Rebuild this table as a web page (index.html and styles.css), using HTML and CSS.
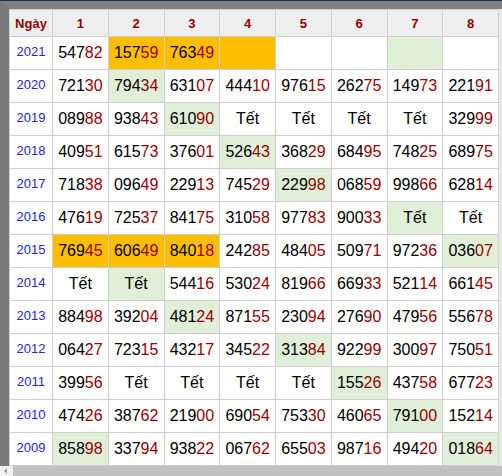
FILE: index.html
```html
<!DOCTYPE html>
<html>
<head>
<meta charset="utf-8">
<link rel="stylesheet" href="styles.css">
</head>
<body>
<div class="frame">
  <div class="inner">
    <div class="grid" id="grid">
      <div class="hd">Ngày</div><div class="hd">1</div><div class="hd">2</div><div class="hd">3</div><div class="hd">4</div><div class="hd">5</div><div class="hd">6</div><div class="hd">7</div><div class="hd">8</div>
    </div>
  </div>
  <div class="hscroll"><span class="arrow"></span><span class="thumb"></span></div>
</div>
<script src="script.js"></script>
</body>
</html>
```
FILE: script.js
```js
var rows = [
  ["2021", ["54782",""],["15759","o"],["76349","o"],["","o"],["",""],["",""],["","g"],["",""]],
  ["2020", ["72130",""],["79434","g"],["63107",""],["44410",""],["97615",""],["26275",""],["14973",""],["22191",""]],
  ["2019", ["08988",""],["93843",""],["61090","g"],["Tết",""],["Tết",""],["Tết",""],["Tết",""],["32999",""]],
  ["2018", ["40951",""],["61573",""],["37601",""],["52643","g"],["36829",""],["68495",""],["74825",""],["68975",""]],
  ["2017", ["71838",""],["09649",""],["22913",""],["74529",""],["22998","g"],["06859",""],["99866",""],["62814",""]],
  ["2016", ["47619",""],["72537",""],["84175",""],["31058",""],["97783",""],["90033",""],["Tết","g"],["Tết",""]],
  ["2015", ["76945","o"],["60649","o"],["84018","o"],["24285",""],["48405",""],["50971",""],["97236",""],["03607","g"]],
  ["2014", ["Tết",""],["Tết","g"],["54416",""],["53024",""],["81966",""],["66933",""],["52114",""],["66145",""]],
  ["2013", ["88498",""],["39204",""],["48124","g"],["87155",""],["23094",""],["27690",""],["47956",""],["55678",""]],
  ["2012", ["06427",""],["72315",""],["43217",""],["34522",""],["31384","g"],["92299",""],["30097",""],["75051",""]],
  ["2011", ["39956",""],["Tết",""],["Tết",""],["Tết",""],["Tết",""],["15526","g"],["43758",""],["67723",""]],
  ["2010", ["47426",""],["38762",""],["21900",""],["69054",""],["75330",""],["46065",""],["79100","g"],["15214",""]],
  ["2009", ["85898","g"],["33794",""],["93822",""],["06762",""],["65503",""],["98716",""],["49420",""],["01864","g"]]
];
var grid = document.getElementById("grid");
rows.forEach(function (r) {
  var y = document.createElement("div");
  y.className = "yr";
  y.textContent = r[0];
  grid.appendChild(y);
  for (var i = 1; i < r.length; i++) {
    var c = document.createElement("div");
    var v = r[i][0], k = r[i][1];
    c.className = "cell" + (k === "o" ? " orange" : k === "g" ? " green" : "");
    if (/^\d{5}$/.test(v)) {
      var a = document.createElement("span");
      a.textContent = v.slice(0, 3);
      var b = document.createElement("span");
      b.className = "tail";
      b.textContent = v.slice(3);
      c.appendChild(a);
      c.appendChild(b);
    } else {
      c.textContent = v;
    }
    grid.appendChild(c);
  }
});
```
FILE: styles.css
```css
html, body {
  margin: 0;
  padding: 0;
  background: #ffffff;
}
body {
  width: 502px;
  height: 476px;
  overflow: hidden;
  font-family: "Liberation Sans", Arial, sans-serif;
}
.frame {
  border-top: 1px solid #12305e;
  background: #e9e9e9;
}
.inner {
  border-top: 8px solid #808080;
  border-left: 9px solid #7a7a7a;
  background: #e9e9e9;
}
.grid {
  display: grid;
  grid-template-columns: 42px repeat(8, 54.75px);
  grid-template-rows: 26px repeat(13, 32px);
  gap: 1px;
  padding: 1px;
  background: #cfcfcf;
  width: max-content;
}
.hd {
  background: #eeeeee;
  color: #990000;
  font-weight: bold;
  font-size: 13px;
  display: flex;
  align-items: center;
  justify-content: center;
}
.yr {
  background: #ffffff;
  color: #2323e0;
  font-size: 13px;
  display: flex;
  align-items: center;
  justify-content: center;
  padding-bottom: 3px;
  box-sizing: border-box;
}
.cell {
  background: #ffffff;
  color: #000000;
  font-size: 16px;
  display: flex;
  align-items: center;
  justify-content: center;
}
.cell.orange { background: #ffbf00; }
.cell.green { background: #dfefd8; }
.tail { color: #990000; }
.hscroll {
  display: flex;
  height: 10px;
  background: #f1f1f1;
}
.arrow {
  width: 13px;
  position: relative;
}
.arrow::after {
  content: "";
  position: absolute;
  left: 4px;
  top: 2px;
  border-top: 3px solid transparent;
  border-bottom: 3px solid transparent;
  border-right: 3px solid #a3a3a3;
}
.thumb {
  flex: 1;
  background: #c1c1c1;
}
```
